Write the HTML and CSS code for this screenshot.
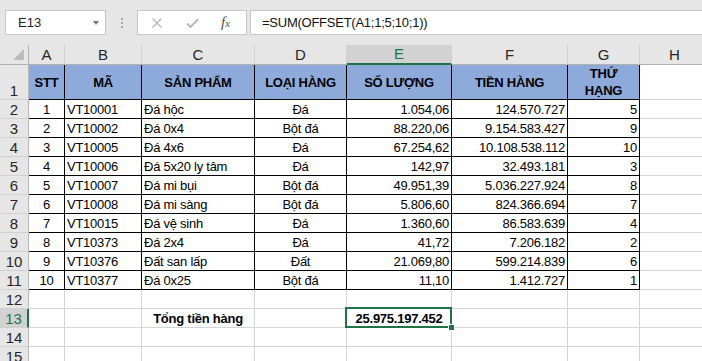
FILE: index.html
```html
<!DOCTYPE html>
<html lang="vi">
<head>
    <meta charset="UTF-8">
    <meta name="viewport" content="width=device-width, initial-scale=1.0">
    <title>Tổng tiền hàng</title>
    <link rel="stylesheet" href="styles.css">
</head>
<body>
    <div class="bar">
        <div class="namebox"><span>E13</span><span class="arrow"></span></div>
        <div class="grip"><i></i><i></i><i></i></div>
        <div class="fbtns">
            <svg class="ic-x" width="10" height="10" viewBox="0 0 10 10"><path d="M0.5 0.5L9.5 9.5M9.5 0.5L0.5 9.5" stroke="#b3b3b3" stroke-width="1.2" fill="none"/></svg>
            <svg class="ic-ok" width="13" height="10" viewBox="0 0 13 10"><path d="M1 5.5L4.5 9L12 1.2" stroke="#b8b8b8" stroke-width="2" fill="none"/></svg>
            <span class="fx">f<small>x</small></span>
        </div>
        <div class="finput">=SUM(OFFSET(A1;1;5;10;1))</div>
    </div>

    <table class="sheet">
        <colgroup>
            <col style="width:29px"><col style="width:36px"><col style="width:77px"><col style="width:113px">
            <col style="width:92px"><col style="width:105px"><col style="width:116px"><col style="width:72px"><col style="width:70px">
        </colgroup>
        <thead>
            <tr>
                <th class="corner"><svg width="12" height="12" viewBox="0 0 12 12"><path d="M11 0V11H0Z" fill="#bcbcbc"/></svg></th>
                <th>A</th><th>B</th><th>C</th><th>D</th><th class="cur">E</th><th>F</th><th>G</th><th>H</th>
            </tr>
        </thead>
        <tbody>
            <tr class="top tb">
                <th>1</th>
                <td>STT</td><td>MÃ</td><td>SẢN PHẨM</td><td>LOẠI HÀNG</td><td>SỐ LƯỢNG</td><td>TIỀN HÀNG</td><td class="wrap">THỨ HẠNG</td><td class="h"></td>
            </tr>
            <tr class="tb"><th>2</th><td class="c">1</td><td>VT10001</td><td>Đá hộc</td><td class="c">Đá</td><td class="r">1.054,06</td><td class="r">124.570.727</td><td class="r">5</td><td class="h"></td></tr>
            <tr class="tb"><th>3</th><td class="c">2</td><td>VT10002</td><td>Đá 0x4</td><td class="c">Bột đá</td><td class="r">88.220,06</td><td class="r">9.154.583.427</td><td class="r">9</td><td class="h"></td></tr>
            <tr class="tb"><th>4</th><td class="c">3</td><td>VT10005</td><td>Đá 4x6</td><td class="c">Đá</td><td class="r">67.254,62</td><td class="r">10.108.538.112</td><td class="r">10</td><td class="h"></td></tr>
            <tr class="tb"><th>5</th><td class="c">4</td><td>VT10006</td><td>Đá 5x20 ly tâm</td><td class="c">Đá</td><td class="r">142,97</td><td class="r">32.493.181</td><td class="r">3</td><td class="h"></td></tr>
            <tr class="tb"><th>6</th><td class="c">5</td><td>VT10007</td><td>Đá mi bụi</td><td class="c">Bột đá</td><td class="r">49.951,39</td><td class="r">5.036.227.924</td><td class="r">8</td><td class="h"></td></tr>
            <tr class="tb"><th>7</th><td class="c">6</td><td>VT10008</td><td>Đá mi sàng</td><td class="c">Bột đá</td><td class="r">5.806,60</td><td class="r">824.366.694</td><td class="r">7</td><td class="h"></td></tr>
            <tr class="tb"><th>8</th><td class="c">7</td><td>VT10015</td><td>Đá vệ sinh</td><td class="c">Đá</td><td class="r">1.360,60</td><td class="r">86.583.639</td><td class="r">4</td><td class="h"></td></tr>
            <tr class="tb"><th>9</th><td class="c">8</td><td>VT10373</td><td>Đá 2x4</td><td class="c">Đá</td><td class="r">41,72</td><td class="r">7.206.182</td><td class="r">2</td><td class="h"></td></tr>
            <tr class="tb"><th>10</th><td class="c">9</td><td>VT10376</td><td>Đất san lấp</td><td class="c">Đất</td><td class="r">21.069,80</td><td class="r">599.214.839</td><td class="r">6</td><td class="h"></td></tr>
            <tr class="tb"><th>11</th><td class="c">10</td><td>VT10377</td><td>Đá 0x25</td><td class="c">Bột đá</td><td class="r">11,10</td><td class="r">1.412.727</td><td class="r">1</td><td class="h"></td></tr>
            <tr><th>12</th><td></td><td></td><td></td><td></td><td></td><td></td><td></td><td></td></tr>
            <tr><th class="cur">13</th><td></td><td></td><td class="c b">Tổng tiền hàng</td><td></td><td class="c b sel">25.975.197.452</td><td></td><td></td><td></td></tr>
            <tr><th>14</th><td></td><td></td><td></td><td></td><td></td><td></td><td></td><td></td></tr>
            <tr><th>15</th><td></td><td></td><td></td><td></td><td></td><td></td><td></td><td></td></tr>
        </tbody>
    </table>
</body>
</html>
```

FILE: styles.css
```css
body { margin: 0; background: #fff; overflow: hidden; font-family: "Liberation Sans", Arial, sans-serif; }

.bar { display: flex; align-items: flex-start; height: 45px; padding-top: 10px; box-sizing: border-box; background: #e6e6e6; }
.namebox { display: flex; align-items: center; margin-left: 5px; width: 101px; height: 25px; padding-left: 12px; box-sizing: border-box; background: #fff; border: 1px solid #c6c6c6; font-size: 13px; color: #222; }
.arrow { margin-left: auto; margin-right: 6px; border-left: 3px solid transparent; border-right: 3px solid transparent; border-top: 4px solid #777; }
.grip { display: flex; flex-direction: column; align-items: center; gap: 2px; width: 31px; padding-top: 8px; }
.grip i { width: 2px; height: 2px; background: #a6a6a6; }
.fbtns { display: flex; align-items: center; width: 110px; height: 25px; box-sizing: border-box; background: #fff; border: 1px solid #c6c6c6; }
.ic-x { margin-left: 14px; }
.ic-ok { margin-left: 24px; }
.fx { margin-left: 22px; font: italic 15px "Liberation Serif", serif; color: #505050; }
.fx small { font-size: 11px; }
.finput { flex: 1; display: flex; align-items: center; margin-left: 3px; height: 25px; padding-left: 11px; box-sizing: border-box; background: #fff; border: 1px solid #c6c6c6; border-right: none; font-size: 13px; letter-spacing: -0.25px; color: #111; }

.sheet { border-collapse: separate; border-spacing: 0; table-layout: fixed; width: 710px; font-size: 13px; letter-spacing: -0.25px; color: #000; }
.sheet td, .sheet th { padding: 0 2px 1px; box-sizing: border-box; border-right: 1px solid #d4d4d4; border-bottom: 1px solid #d4d4d4; white-space: nowrap; overflow: hidden; vertical-align: bottom; line-height: 15px; text-align: left; }
.sheet thead tr { height: 20px; }
.sheet thead th { background: #e6e6e6; font-weight: normal; font-size: 15px; letter-spacing: 0; color: #262626; text-align: center; vertical-align: middle; line-height: 18px; padding-bottom: 0; border-right-color: #d0d0d0; border-bottom-color: #b0b0b0; }
.sheet thead th.corner { position: relative; border-right-color: #b0b0b0; }
.corner svg { position: absolute; right: 3px; bottom: 3px; }
.sheet tbody tr { height: 19px; }
.sheet tbody th { background: #e6e6e6; font-weight: normal; font-size: 15px; letter-spacing: 0; color: #262626; text-align: center; border-right-color: #b8b8b8; border-bottom-color: #d0d0d0; }
.sheet th.cur { background: #d2d2d2; color: #217346; }
.sheet thead th.cur { border-bottom: 2px solid #217346; }
.sheet tbody th.cur { border-right: 2px solid #217346; }

.tb td { border-right-color: #000; border-bottom-color: #000; }
.tb td.h { border-right-color: #d4d4d4; border-bottom-color: #d4d4d4; }
.sheet tr.top { height: 34px; }
.top td { background: #8eaadb; font-weight: bold; text-align: center; vertical-align: middle; line-height: 17px; padding-bottom: 0; }
.top td.h { background: #fff; }
.top td.wrap { white-space: normal; }

.c { text-align: center; }
.sheet td.c { text-align: center; }
.sheet td.r { text-align: right; }
.b { font-weight: bold; }

.sheet td.sel { position: relative; overflow: visible; }
.sel::before { content: ""; position: absolute; left: -2px; top: -2px; right: -1px; bottom: -1px; border: 2px solid #217346; }
.sel::after { content: ""; position: absolute; right: -4px; bottom: -4px; width: 5px; height: 5px; background: #217346; border: 1px solid #fff; }
```
